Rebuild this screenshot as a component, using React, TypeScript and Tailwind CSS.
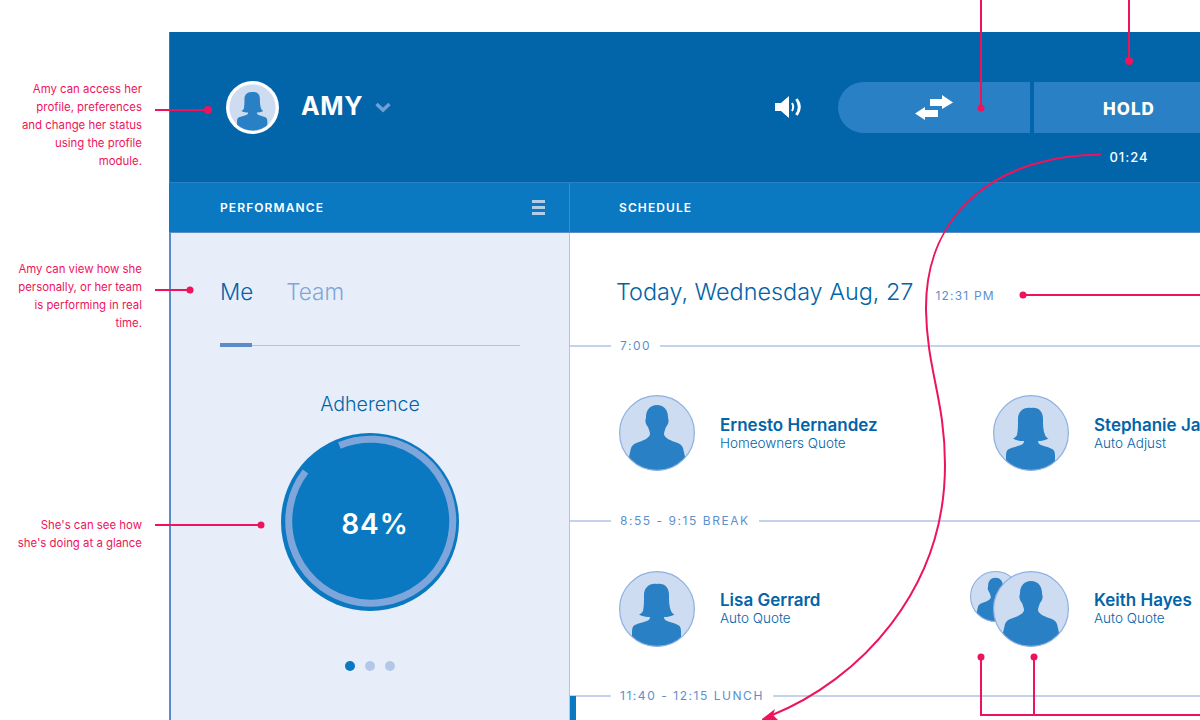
import React from "react";

const MALE =
  "M38 10C45 10 49 15 49 22C49 24 50 25 49.5 27C49 29 48 31 47 32C46 35 45 37 45 39C45 42 50 45 56 47C60 48 63 50 64 53L67 66V76H9V66L12 53C13 50 16 48 20 47C26 45 31 42 31 39C31 37 30 35 29 32C28 31 27 29 26.5 27C26 25 27 24 27 22C27 15 31 10 38 10Z";
const FEMALE =
  "M38 13C46 12 50 17 50 24C50 30 50 35 52 40C53 42 54 43 55.5 43.5C52 45.5 48 46 45 46C45 48 46 49 48 50C53 51.5 58 53 60 54.5C62 56 62 59 62 62V76H13V62C13 59 13 56 15 54.5C17 53 23 51.5 28 50C30 49 31 48 31 46C28 46 23 45.5 20 43.5C21.5 43 23 42 24 40C25 35 25 30 25 24C25 17 30 12 38 13Z";

function Avatar({ path, id, ring = "#8fb0e0", ringWidth = 1.2 }: { path: string; id: string; ring?: string; ringWidth?: number }) {
  return (
    <svg viewBox="0 0 76 76" className="block h-full w-full">
      <defs>
        <clipPath id={id}>
          <circle cx="38" cy="38" r="37.5" />
        </clipPath>
      </defs>
      <circle cx="38" cy="38" r="37.5" fill="#cddcf0" />
      <path d={path} fill="#2a80c4" clipPath={`url(#${id})`} />
      <circle cx="38" cy="38" r={38 - ringWidth / 2} fill="none" stroke={ring} strokeWidth={ringWidth} />
    </svg>
  );
}

function Divider({ label }: { label: string }) {
  return (
    <div className="flex h-4 items-center">
      <div className="h-[2px] w-[41px] bg-[#c2d3eb]" />
      <div className="px-[9px] text-[12px] leading-4 tracking-[1.55px] whitespace-nowrap text-[#5b8fcf]">{label}</div>
      <div className="h-[2px] flex-1 bg-[#c2d3eb]" />
    </div>
  );
}

function Person({ path, id, name, type, textClass = "", children }: { path: string; id: string; name: string; type: string; textClass?: string; children?: React.ReactNode }) {
  return (
    <div className="flex w-[374px] shrink-0 items-center gap-[25px]">
      <div className="relative h-[76px] w-[76px] shrink-0">
        {children}
        <div className="relative h-full w-full">
          <Avatar path={path} id={id} />
        </div>
      </div>
      <div className={`whitespace-nowrap text-[#0264a9] ${textClass}`}>
        <div className="text-[17px] leading-5 font-semibold">{name}</div>
        <div className="text-[13.5px] leading-4 font-light">{type}</div>
      </div>
    </div>
  );
}

function Notes() {
  return (
    <svg className="pointer-events-none absolute top-0 left-0" width="1200" height="720" viewBox="0 0 1200 720" fill="none">
      <g stroke="#ed145b" strokeWidth="2">
        <path d="M155 110H208" />
        <path d="M155 290H190" />
        <path d="M155 525H261" />
        <path d="M981 0V108" />
        <path d="M1129 0V61" />
        <path d="M1023 295H1200" />
        <path d="M981 657V715H1200" />
        <path d="M1034 657V715" />
        <path d="M1101 154.500C1000 155 925 210 926 310C927 370 945 400 945 465C945 590 860 680 770 716" />
      </g>
      <g fill="#ed145b">
        <circle cx="208" cy="110" r="4" />
        <circle cx="190" cy="290" r="3.500" />
        <circle cx="261" cy="525" r="3.500" />
        <circle cx="981" cy="108" r="3.500" />
        <circle cx="1129" cy="61" r="4" />
        <circle cx="1023" cy="295" r="3.500" />
        <circle cx="981" cy="657" r="3.500" />
        <circle cx="1034" cy="657" r="3.500" />
        <path d="M762 719L775 709L773 715L778 720H762Z" />
      </g>
    </svg>
  );
}

export default function App() {
  return (
    <div className="relative flex h-[720px] w-[1200px] overflow-hidden bg-white pt-8 font-['Inter',sans-serif]">
      {/* annotations */}
      <div className="w-[169px] shrink-0 pt-[48px] pr-[27px] text-right text-[11.4px] leading-[18px] text-[#ed145b]">
        <p>
          Amy can access her
          <br />
          profile, preferences
          <br />
          and change her status
          <br />
          using the profile
          <br />
          module.
        </p>
        <p className="mt-[90px]">
          Amy can view how she
          <br />
          personally, or her team
          <br />
          is performing in real
          <br />
          time.
        </p>
        <p className="mt-[184px]">
          She's can see how
          <br />
          she's doing at a glance
        </p>
      </div>

      <div className="flex min-w-0 flex-1 flex-col">
        {/* top bar */}
        <div className="flex h-[150px] shrink-0 items-start border-l border-[#2a80c4] bg-[#0264a9] pt-[49px] pl-[56px]">
          <div className="h-[53px] w-[53px] shrink-0 rounded-full bg-white p-[3px]">
            <Avatar path={FEMALE} id="me" ring="#ffffff" ringWidth={0.5} />
          </div>
          <div className="ml-[22px] flex h-[51px] w-[74px] shrink-0 items-center text-[25px] font-bold tracking-[0.7px] text-white">AMY</div>
          <svg className="mt-[21px] shrink-0" width="16" height="11" viewBox="0 0 16 11">
            <path d="M1.500 2L8 8L14.500 2" fill="none" stroke="#6f9fd8" strokeWidth="3.500" />
          </svg>
          <svg className="mt-[15px] ml-[384px] shrink-0" width="27" height="22" viewBox="0 0 27 22">
            <path d="M0 7H6L14 0V22L6 15H0Z" fill="#fff" />
            <path d="M17 7C18.500 9.500 18.500 12.500 17 15" fill="none" stroke="#fff" strokeWidth="2" />
            <path d="M21.500 3C25 8 25 14 21.500 19" fill="none" stroke="#fff" strokeWidth="3" />
          </svg>
          <div className="mt-px ml-[36px] flex shrink-0 gap-1">
            <div className="flex h-[51px] w-[192px] items-center rounded-l-full bg-[#2a80c4] pl-[77px]">
              <svg width="38" height="25" viewBox="0 0 38 25">
                <path d="M15 4H27V0L38 7.500L27 14V11H15Z" fill="#fff" />
                <path d="M23 15H10V12L0 18.500L10 25V22H23Z" fill="#fff" />
              </svg>
            </div>
            <div className="w-[190px]">
              <div className="flex h-[51px] items-center justify-center bg-[#2a80c4] pt-1 text-[17px] font-extrabold tracking-[1px] text-white">HOLD</div>
              <div className="mt-[16px] text-center text-[13px] leading-4 font-medium tracking-[1px] text-white">01:24</div>
            </div>
          </div>
        </div>

        {/* section titles */}
        <div className="flex h-[51px] shrink-0 border-t border-b border-t-[#2a80c4] border-b-[#5b8cc9] bg-[#0a79c1] text-[12px] font-semibold tracking-[1.1px] text-white">
          <div className="flex w-[401px] shrink-0 items-center justify-between border-r border-[#3a8ccb] pr-[24px] pl-[51px]">
            <span>PERFORMANCE</span>
            <div className="flex w-[13px] flex-col gap-[3px]">
              <div className="h-[3px] bg-[#b3cde8]" />
              <div className="h-[3px] bg-[#b3cde8]" />
              <div className="h-[3px] bg-[#b3cde8]" />
            </div>
          </div>
          <div className="flex items-center pl-[49px]">SCHEDULE</div>
        </div>

        <div className="flex min-h-0 flex-1">
          {/* performance */}
          <div className="flex w-[401px] shrink-0 flex-col border-r border-l-2 border-r-[#adc4e5] border-l-[#5b8cc9] bg-[#e8eef9] pl-[49px]">
            <div className="flex gap-[33px] pt-[43px] text-[22.5px] leading-8 font-light">
              <span className="text-[#0264a9]">Me</span>
              <span className="text-[#7fa6da]">Team</span>
            </div>
            <div className="relative mt-[37px] h-px w-[300px] bg-[#adc4e5]">
              <div className="absolute -top-[2px] left-0 h-[4px] w-[32px] bg-[#5b8cc9]" />
            </div>
            <div className="mt-[46px] w-[300px] text-center text-[19.6px] leading-6 font-light text-[#0264a9]">Adherence</div>
            <div className="relative mt-[17px] ml-[61px] flex h-[178px] w-[178px] items-center justify-center">
              <svg className="absolute inset-0" width="178" height="178" viewBox="0 0 178 178">
                <circle cx="89" cy="89" r="89" fill="#0a79c1" />
                <path d="M58.400 12.400A82 82 0 1 1 24.500 38.500" fill="none" stroke="#7fa6da" strokeWidth="7" />
              </svg>
              <span className="relative mt-[3px] ml-[10px] text-[28px] font-semibold tracking-[1px] text-white">84%</span>
            </div>
            <div className="mt-[50px] ml-[125px] flex gap-[10px]">
              <div className="h-[10px] w-[10px] rounded-full bg-[#0a79c1]" />
              <div className="h-[10px] w-[10px] rounded-full bg-[#b3c8e8]" />
              <div className="h-[10px] w-[10px] rounded-full bg-[#b3c8e8]" />
            </div>
          </div>

          {/* schedule */}
          <div className="relative min-w-0 flex-1">
            <div className="flex h-[105px] items-baseline gap-[22px] pt-[43px] pl-[46px] whitespace-nowrap text-[#0264a9]">
              <span className="text-[23.4px] leading-8 font-light">Today, Wednesday Aug, 27</span>
              <span className="text-[12px] tracking-[1.2px] text-[#5b8fcf]">12:31 PM</span>
            </div>
            <Divider label="7:00" />
            <div className="flex h-[159px] items-start pt-[41px] pl-[49px]">
              <Person path={MALE} id="ernesto" name="Ernesto Hernandez" type="Homeowners Quote" />
              <Person path={FEMALE} id="stephanie" name="Stephanie Ja" type="Auto Adjust" />
            </div>
            <Divider label="8:55 - 9:15 BREAK" />
            <div className="flex h-[159px] items-start pt-[42px] pl-[49px]">
              <Person path={FEMALE} id="lisa" name="Lisa Gerrard" type="Auto Quote" textClass="-mt-[2px]" />
              <Person path={MALE} id="keith" name="Keith Hayes" type="Auto Quote" textClass="-mt-[2px]">
                <div className="absolute top-0 -left-[23px] h-[51px] w-[51px]">
                  <Avatar path={MALE} id="keith-back" ringWidth={1.6} />
                </div>
              </Person>
            </div>
            <Divider label="11:40 - 12:15 LUNCH" />
            <div className="absolute top-[463px] left-0 h-[25px] w-[6px] bg-[#0a79c1]" />
          </div>
        </div>
      </div>
      <Notes />
    </div>
  );
}
